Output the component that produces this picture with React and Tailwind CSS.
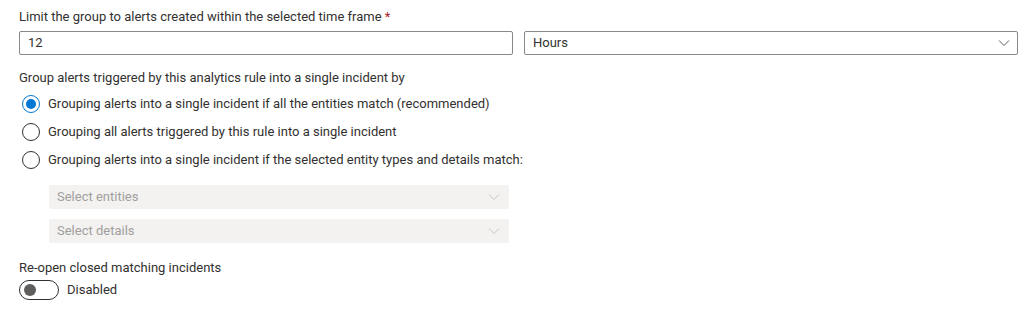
import React from "react";

const Chevron = ({ color = "#605e5c" }) => (
  <svg width="12" height="8" viewBox="0 0 12 8" fill="none">
    <path d="M1 1.5 L6 6.5 L11 1.5" stroke={color} strokeWidth="1" />
  </svg>
);

const Radio = ({ checked, label }) => (
  <div className="flex items-center h-[28px]">
    <div
      className={
        checked
          ? "w-[18px] h-[18px] rounded-full border border-[#0078d4] flex items-center justify-center"
          : "w-[18px] h-[18px] rounded-full border border-[#323130]"
      }
    >
      {checked && <div className="w-[10px] h-[10px] rounded-full bg-[#0078d4]" />}
    </div>
    <span className="ml-[8px]">{label}</span>
  </div>
);

const DisabledSelect = ({ placeholder }) => (
  <div className="w-[460px] h-[24px] bg-[#f3f2f1] rounded-[2px] flex items-center justify-between pl-[8px] pr-[9px] text-[#a19f9d]">
    <span>{placeholder}</span>
    <Chevron color="#c8c6c4" />
  </div>
);

export default function App() {
  return (
    <div
      className="w-[1032px] h-[320px] bg-white text-[#323130] text-[13px] pl-[19px] pt-[9px]"
      style={{ fontFamily: "'Segoe UI', Roboto, sans-serif" }}
    >
      <div className="leading-[16px]">
        Limit the group to alerts created within the selected time frame{" "}
        <span className="text-[#a4262c]">*</span>
      </div>
      <div className="flex gap-[11px] mt-[6px] w-[999px]">
        <div className="w-[494px] h-[24px] border border-[#8a8886] rounded-[2px] flex items-center pl-[8px]">
          12
        </div>
        <div className="w-[494px] h-[24px] border border-[#8a8886] rounded-[2px] flex items-center justify-between pl-[8px] pr-[7px]">
          <span>Hours</span>
          <Chevron />
        </div>
      </div>
      <div className="leading-[16px] mt-[15px]">
        Group alerts triggered by this analytics rule into a single incident by
      </div>
      <div className="mt-[4px] pl-[3px]">
        <Radio checked label="Grouping alerts into a single incident if all the entities match (recommended)" />
        <Radio label="Grouping all alerts triggered by this rule into a single incident" />
        <Radio label="Grouping alerts into a single incident if the selected entity types and details match:" />
      </div>
      <div className="pl-[30px] mt-[11px] flex flex-col gap-[10px]">
        <DisabledSelect placeholder="Select entities" />
        <DisabledSelect placeholder="Select details" />
      </div>
      <div className="leading-[16px] mt-[17px]">Re-open closed matching incidents</div>
      <div className="flex items-center mt-[4px]">
        <div className="w-[40px] h-[20px] rounded-full border border-[#323130] flex items-center pl-[4px]">
          <div className="w-[12px] h-[12px] rounded-full bg-[#605e5c]" />
        </div>
        <span className="ml-[8px]">Disabled</span>
      </div>
    </div>
  );
}
